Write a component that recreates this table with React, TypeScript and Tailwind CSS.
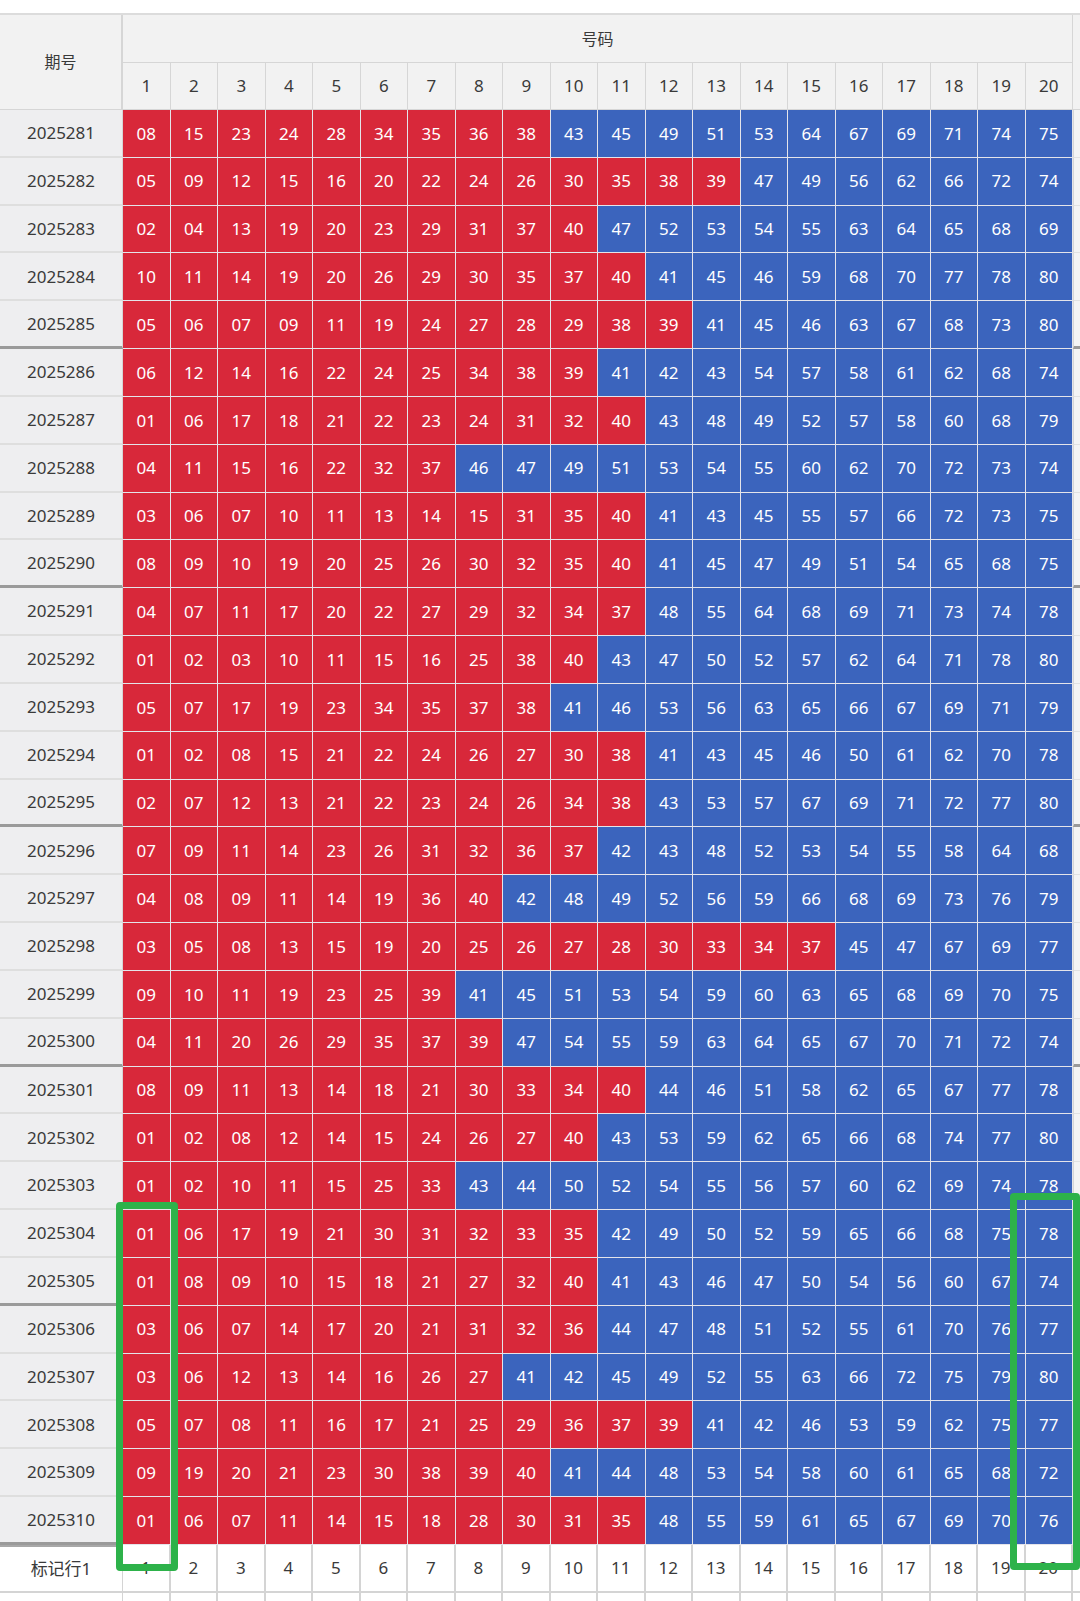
const rows: [string, string][] = [
  ['2025281', '08 15 23 24 28 34 35 36 38 43 45 49 51 53 64 67 69 71 74 75'],
  ['2025282', '05 09 12 15 16 20 22 24 26 30 35 38 39 47 49 56 62 66 72 74'],
  ['2025283', '02 04 13 19 20 23 29 31 37 40 47 52 53 54 55 63 64 65 68 69'],
  ['2025284', '10 11 14 19 20 26 29 30 35 37 40 41 45 46 59 68 70 77 78 80'],
  ['2025285', '05 06 07 09 11 19 24 27 28 29 38 39 41 45 46 63 67 68 73 80'],
  ['2025286', '06 12 14 16 22 24 25 34 38 39 41 42 43 54 57 58 61 62 68 74'],
  ['2025287', '01 06 17 18 21 22 23 24 31 32 40 43 48 49 52 57 58 60 68 79'],
  ['2025288', '04 11 15 16 22 32 37 46 47 49 51 53 54 55 60 62 70 72 73 74'],
  ['2025289', '03 06 07 10 11 13 14 15 31 35 40 41 43 45 55 57 66 72 73 75'],
  ['2025290', '08 09 10 19 20 25 26 30 32 35 40 41 45 47 49 51 54 65 68 75'],
  ['2025291', '04 07 11 17 20 22 27 29 32 34 37 48 55 64 68 69 71 73 74 78'],
  ['2025292', '01 02 03 10 11 15 16 25 38 40 43 47 50 52 57 62 64 71 78 80'],
  ['2025293', '05 07 17 19 23 34 35 37 38 41 46 53 56 63 65 66 67 69 71 79'],
  ['2025294', '01 02 08 15 21 22 24 26 27 30 38 41 43 45 46 50 61 62 70 78'],
  ['2025295', '02 07 12 13 21 22 23 24 26 34 38 43 53 57 67 69 71 72 77 80'],
  ['2025296', '07 09 11 14 23 26 31 32 36 37 42 43 48 52 53 54 55 58 64 68'],
  ['2025297', '04 08 09 11 14 19 36 40 42 48 49 52 56 59 66 68 69 73 76 79'],
  ['2025298', '03 05 08 13 15 19 20 25 26 27 28 30 33 34 37 45 47 67 69 77'],
  ['2025299', '09 10 11 19 23 25 39 41 45 51 53 54 59 60 63 65 68 69 70 75'],
  ['2025300', '04 11 20 26 29 35 37 39 47 54 55 59 63 64 65 67 70 71 72 74'],
  ['2025301', '08 09 11 13 14 18 21 30 33 34 40 44 46 51 58 62 65 67 77 78'],
  ['2025302', '01 02 08 12 14 15 24 26 27 40 43 53 59 62 65 66 68 74 77 80'],
  ['2025303', '01 02 10 11 15 25 33 43 44 50 52 54 55 56 57 60 62 69 74 78'],
  ['2025304', '01 06 17 19 21 30 31 32 33 35 42 49 50 52 59 65 66 68 75 78'],
  ['2025305', '01 08 09 10 15 18 21 27 32 40 41 43 46 47 50 54 56 60 67 74'],
  ['2025306', '03 06 07 14 17 20 21 31 32 36 44 47 48 51 52 55 61 70 76 77'],
  ['2025307', '03 06 12 13 14 16 26 27 41 42 45 49 52 55 63 66 72 75 79 80'],
  ['2025308', '05 07 08 11 16 17 21 25 29 36 37 39 41 42 46 53 59 62 75 77'],
  ['2025309', '09 19 20 21 23 30 38 39 40 41 44 48 53 54 58 60 61 65 68 72'],
  ['2025310', '01 06 07 11 14 15 18 28 30 31 35 48 55 59 61 65 67 69 70 76'],
];

const cols = Array.from({ length: 20 }, (_, i) => i + 1);

export default function App() {
  return (
    <div
      className="relative w-[1080px] h-[1601px] overflow-hidden bg-white text-[#3a3a3a]"
      style={{ fontFamily: '"Noto Sans", "Noto Sans CJK SC", sans-serif' }}
    >
      <div className="pt-[13px] w-[1160px]">
        {/* header */}
        <div className="flex border-t-2 border-[#dcdcdc]">
          <div className="w-[123px] h-[95px] shrink-0 bg-[#f2f2f2] border-r-2 border-b border-[#d6d6d6] flex items-center justify-center text-[16px]">
            期号
          </div>
          <div className="w-[950px] shrink-0">
            <div className="h-[48px] bg-[#f2f2f2] border-b border-r border-[#d6d6d6] flex items-center justify-center text-[16px]">
              号码
            </div>
            <div className="flex h-[47px]">
              {cols.map((c) => (
                <div key={c} className="w-[47.5px] shrink-0 bg-[#f2f2f2] border-r border-b border-[#d6d6d6] flex items-center justify-center text-[17px]">
                  {c}
                </div>
              ))}
            </div>
          </div>
          <div className="flex-1 h-[95px] bg-[#f2f2f2] border-b border-[#d6d6d6]" />
        </div>

        {/* data rows */}
        {rows.map(([issue, nums], idx) => {
          const sep = idx % 5 === 4;
          return (
            <div key={issue} className="flex h-[47.83px]">
              <div className={`w-[123px] shrink-0 bg-[#eeeef0] border-r border-[#d6d6d6] flex items-center justify-center text-[17px] ${sep ? 'border-b-[3px] border-b-[#9a9a9a]' : 'border-b-2 border-b-[#dedede]'}`}>
                {issue}
              </div>
              {nums.split(' ').map((n, i) => (
                <div
                  key={i}
                  className={`w-[47.5px] shrink-0 border-r border-b border-[#e4e4ea] flex items-center justify-center text-[17px] text-white ${Number(n) <= 40 ? 'bg-[#d8283a]' : 'bg-[#3b64bd]'}`}
                >
                  {n}
                </div>
              ))}
              <div className={`flex-1 bg-[#f4f4f4] border-l border-[#d6d6d6] ${sep ? 'border-b-[3px] border-b-[#9a9a9a]' : 'border-b border-b-[#e2e2e2]'}`} />
            </div>
          );
        })}

        {/* footer */}
        <div className="flex h-[48px]">
          <div className="w-[123px] shrink-0 border-t-2 border-t-[#a8a8a8] border-r border-b-2 border-[#d4d4d4] flex items-center justify-center text-[17px]">
            标记行1
          </div>
          {cols.map((c) => (
            <div key={c} className="w-[47.5px] shrink-0 border-r-2 border-b-2 border-[#d4d4d4] flex items-center justify-center text-[17px]">
              {c}
            </div>
          ))}
          <div className="flex-1 border-t-2 border-t-[#a8a8a8] border-b-2 border-[#d4d4d4]" />
        </div>
        <div className="flex h-[20px]">
          <div className="w-[123px] shrink-0 border-r border-[#d4d4d4]" />
          {cols.map((c) => (
            <div key={c} className="w-[47.5px] shrink-0 border-r-2 border-[#d4d4d4]" />
          ))}
        </div>
      </div>

      {/* green markers */}
      <div className="absolute left-[116px] top-[1202px] w-[62px] h-[369px] border-[7px] border-[#2db24a] rounded-[4px]" />
      <div className="absolute left-[1010px] top-[1193px] w-[70px] h-[377px] border-[7px] border-[#2db24a] rounded-[4px]" />
    </div>
  );
}
